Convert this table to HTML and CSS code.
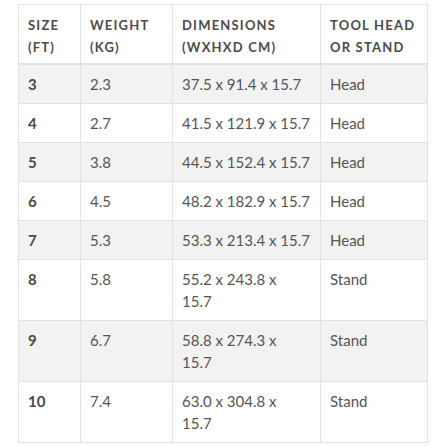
FILE: index.html
```html
<!DOCTYPE html>
<html>
<head>
<meta charset="utf-8">
<link rel="stylesheet" href="styles.css">
</head>
<body>
<div class="wrap">
<table class="spec">
<colgroup><col class="c1"><col class="c2"><col class="c3"><col class="c4"></colgroup>
<thead>
<tr><th>Size<br>(ft)</th><th>Weight<br>(kg)</th><th>Dimensions<br>(WxHxD cm)</th><th>Tool head<br>or stand</th></tr>
</thead>
<tbody>
<tr><td class="b">3</td><td>2.3</td><td>37.5 x 91.4 x 15.7</td><td>Head</td></tr>
<tr><td class="b">4</td><td>2.7</td><td>41.5 x 121.9 x 15.7</td><td>Head</td></tr>
<tr><td class="b">5</td><td>3.8</td><td>44.5 x 152.4 x 15.7</td><td>Head</td></tr>
<tr><td class="b">6</td><td>4.5</td><td>48.2 x 182.9 x 15.7</td><td>Head</td></tr>
<tr><td class="b">7</td><td>5.3</td><td>53.3 x 213.4 x 15.7</td><td>Head</td></tr>
<tr><td class="b">8</td><td>5.8</td><td>55.2 x 243.8 x<br>15.7</td><td>Stand</td></tr>
<tr><td class="b">9</td><td>6.7</td><td>58.8 x 274.3 x<br>15.7</td><td>Stand</td></tr>
<tr><td class="b">10</td><td>7.4</td><td>63.0 x 304.8 x<br>15.7</td><td>Stand</td></tr>
</tbody>
</table>
</div>
</body>
</html>
```
FILE: styles.css
```css
html, body { margin: 0; padding: 0; background: #fff; }
.wrap { padding: 4px 0 0 18px; }
.spec {
  border-collapse: collapse;
  table-layout: fixed;
  width: 409px;
  font-family: Lato, "Liberation Sans", sans-serif;
  font-size: 15px;
  line-height: 22px;
  color: #555;
}
.c1 { width: 62px; }
.c2 { width: 92px; }
.c3 { width: 148px; }
.c4 { width: 107px; }
.spec th, .spec td {
  border: 1px solid #e2e2e2;
  text-align: left;
  vertical-align: top;
  white-space: nowrap;
}
.spec th {
  padding: 9px 8px 5px 9px;
  font-weight: 700;
  text-transform: uppercase;
  letter-spacing: 1.2px;
  font-size: 13px;
  color: #4a4a4a;
  border-bottom: 2px solid #e2e2e2;
}
.spec td { padding: 8px 8px 8px 9px; }
.spec tbody tr:nth-child(odd) td { background: #f2f2f2; }
.spec td.b { font-weight: 700; color: #4a4a4a; }
```
